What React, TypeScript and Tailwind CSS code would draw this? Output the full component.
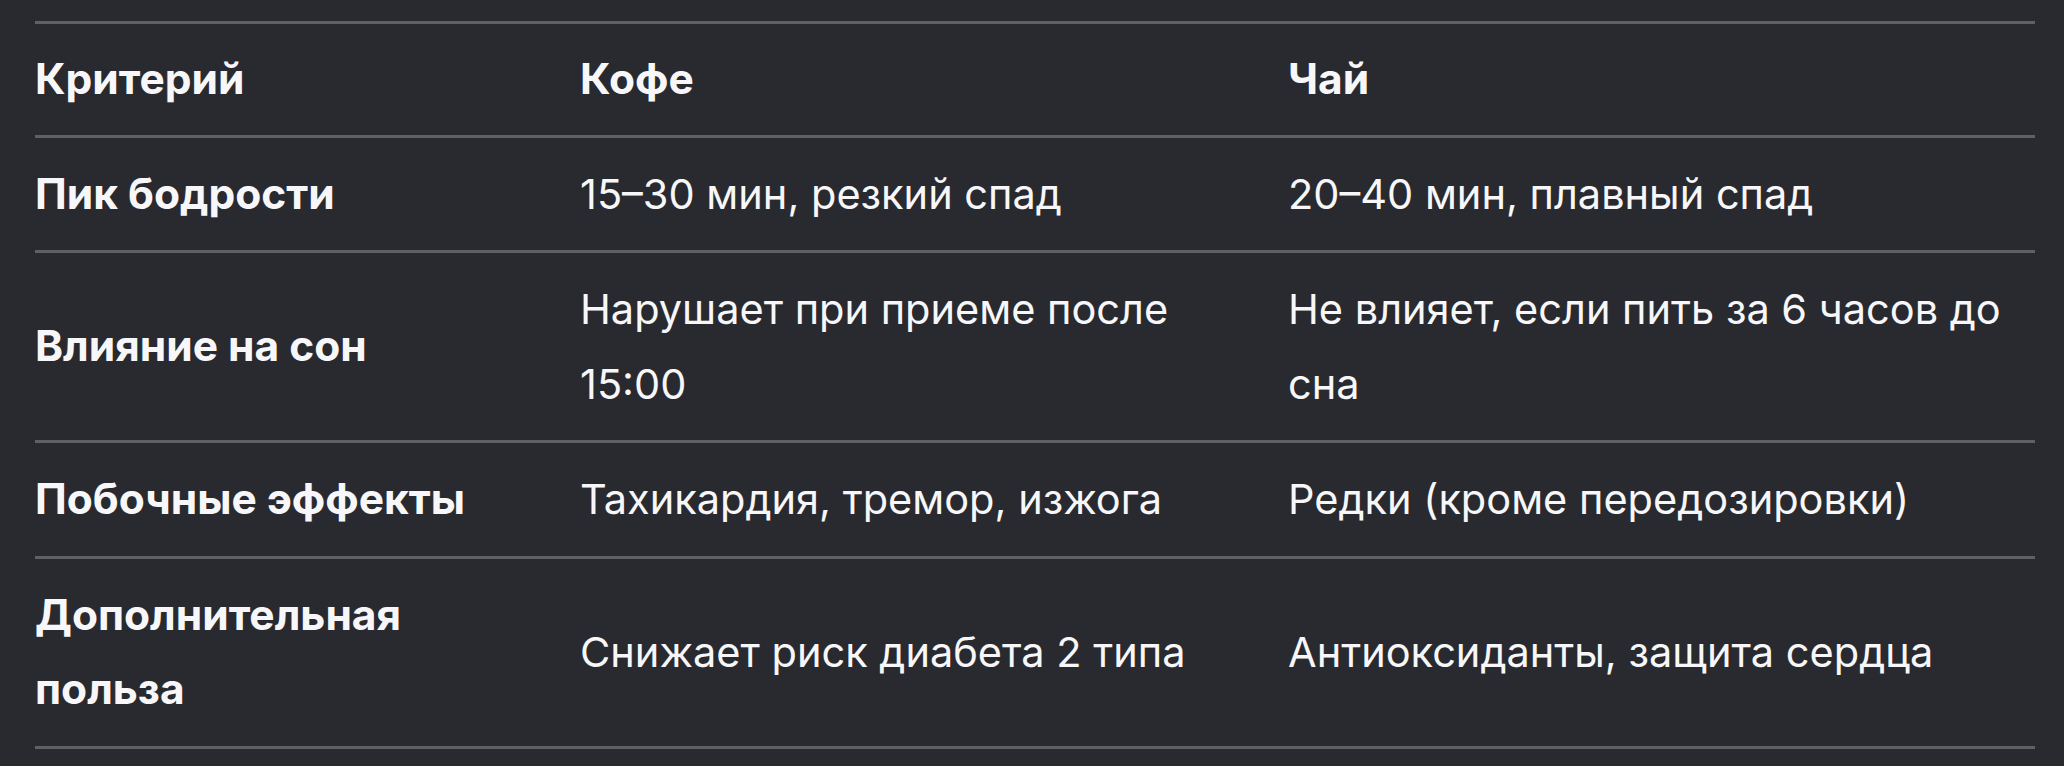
import React from 'react';

// Сравнение кофе и чая
const rows = [
  { name: 'Пик бодрости', coffee: '15–30 мин, резкий спад', tea: '20–40 мин, плавный спад' },
  { name: 'Влияние на сон', coffee: 'Нарушает при приеме после 15:00', tea: 'Не влияет, если пить за 6 часов до сна' },
  { name: 'Побочные эффекты', coffee: 'Тахикардия, тремор, изжога', tea: 'Редки (кроме передозировки)' },
  { name: 'Дополнительная польза', coffee: 'Снижает риск диабета 2 типа', tea: 'Антиоксиданты, защита сердца' },
];

export default function App() {
  return (
    <div
      className="min-h-[766px] w-[2064px] bg-[#292a2f] pt-[21px] pl-[35px] text-[#f7f7f9]"
      style={{ fontFamily: 'Inter, "Noto Sans", sans-serif' }}
    >
      <table className="w-[2000px] table-fixed border-collapse text-[41.5px] leading-[74.5px]">
        <colgroup>
          <col className="w-[508px]" />
          <col className="w-[708px]" />
          <col className="w-[784px]" />
        </colgroup>
        <thead>
          <tr className="border-y-[3px] border-[#5f6063]">
            <th className="py-[18px] pl-0 pr-[36px] text-left align-middle text-[42.5px] font-bold">Критерий</th>
            <th className="py-[18px] px-[37px] text-left align-middle text-[42.5px] font-bold">Кофе</th>
            <th className="py-[18px] pl-[37px] pr-0 text-left align-middle text-[42.5px] font-bold">Чай</th>
          </tr>
        </thead>
        <tbody>
          {rows.map((r) => (
            <tr key={r.name} className="border-b-[3px] border-[#5f6063]">
              <td className="py-[19px] pl-0 pr-[36px] align-middle text-[42.5px] font-bold">{r.name}</td>
              <td className="py-[19px] px-[37px] align-middle">{r.coffee}</td>
              <td className="py-[19px] pl-[37px] pr-0 align-middle">{r.tea}</td>
            </tr>
          ))}
        </tbody>
      </table>
    </div>
  );
}
